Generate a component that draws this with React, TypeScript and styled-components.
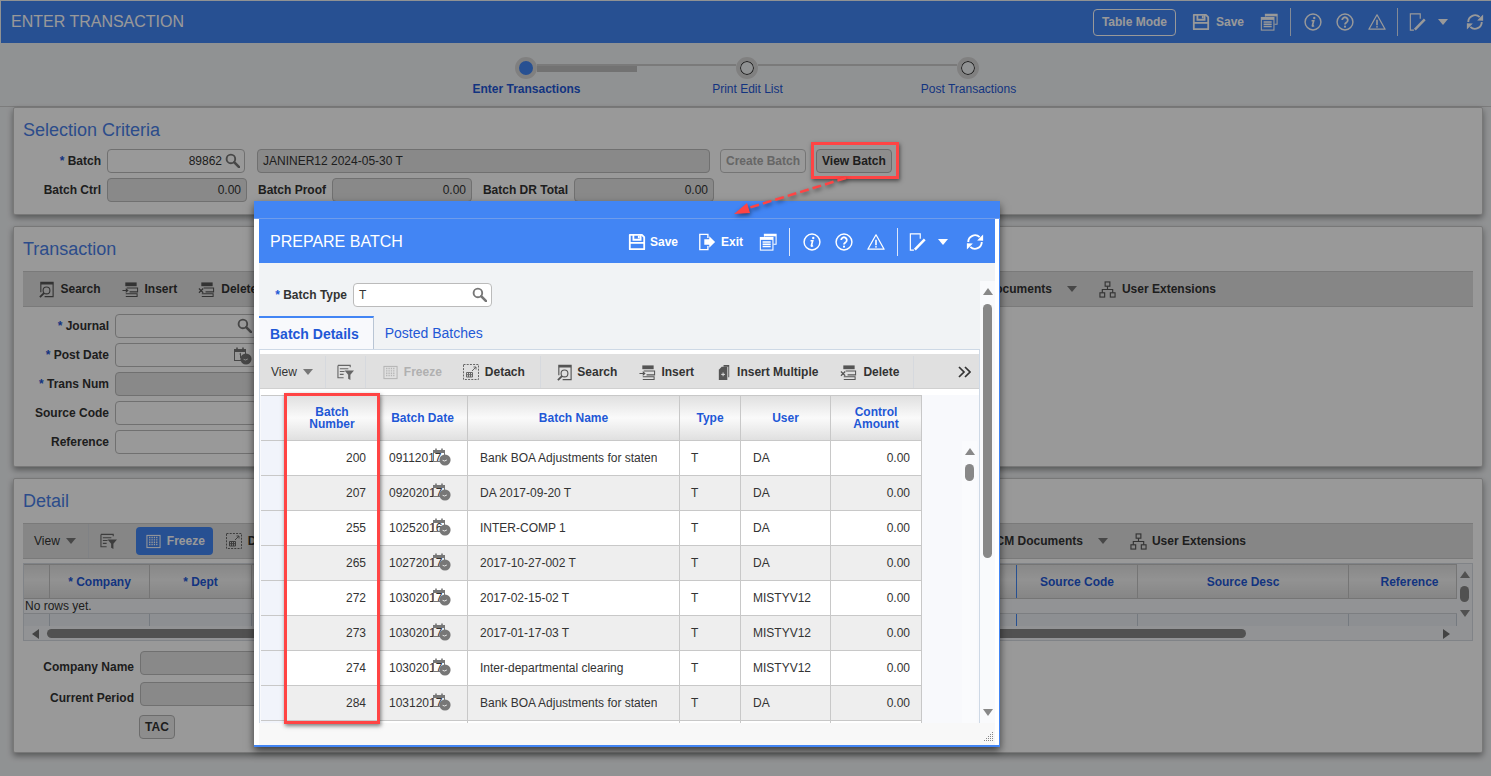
import React from 'react';
import styled, { createGlobalStyle } from 'styled-components';

const GlobalStyle = createGlobalStyle`
    html, body {
        margin: 0;
        padding: 0;
        background-color: #f1f3f5;
        font-family: "Liberation Sans", Arial, sans-serif;
        font-size: 12px;
        color: #333333;
    }
    * {
        box-sizing: border-box;
    }
`;

type IconProps = { size?: number };

const SaveIcon = ({ size = 18 }: IconProps) => (
    <svg width={size} height={size} viewBox="0 0 20 20" fill="none" stroke="currentColor" strokeWidth="2">
        <path d="M2 2h13.5L18 4.5V18H2z" strokeLinejoin="round" />
        <path d="M6 2v5.5h8V2" />
        <path d="M2 11h16" />
        <rect x="11" y="3" width="2" height="3" fill="currentColor" stroke="none" />
    </svg>
);

const ExitIcon = ({ size = 18 }: IconProps) => (
    <svg width={size} height={size} viewBox="0 0 20 20" fill="none" stroke="currentColor" strokeWidth="1.5">
        <path d="M11 5.5V1.5H2v17h9v-4" />
        <path d="M7 7h5.5V3.5L19 10l-6.5 6.5V13H7z" fill="currentColor" stroke="none" />
    </svg>
);

const ReportIcon = ({ size = 18 }: IconProps) => (
    <svg width={size} height={size} viewBox="0 0 20 20" fill="none" stroke="currentColor" strokeWidth="1.2">
        <path d="M6 4V1.5h13v11h-3" />
        <rect x="1.5" y="5" width="14" height="14" fill="none" />
        <path d="M1.5 6.5h14M4 10h9M4 12.5h9M4 15h9" strokeWidth="1.4" />
        <rect x="1.5" y="5" width="14" height="2.5" fill="currentColor" stroke="none" />
        <rect x="6" y="1.5" width="13" height="2.2" fill="currentColor" stroke="none" />
    </svg>
);

const InfoIcon = ({ size = 18 }: IconProps) => (
    <svg width={size} height={size} viewBox="0 0 20 20" fill="none" stroke="currentColor" strokeWidth="1.6">
        <circle cx="10" cy="10" r="8.8" />
        <path d="M8.4 8.6h2.4l-1.5 5.6c-.1.6.5.7 1.8-.3" strokeWidth="1.8" />
        <circle cx="11.4" cy="5.6" r="1.3" fill="currentColor" stroke="none" />
    </svg>
);

const HelpIcon = ({ size = 18 }: IconProps) => (
    <svg width={size} height={size} viewBox="0 0 20 20" fill="none" stroke="currentColor" strokeWidth="1.6">
        <circle cx="10" cy="10" r="8.8" />
        <path d="M6.9 7.9a3.1 3.1 0 1 1 4.9 2.5c-1.1.8-1.8 1.2-1.8 2.4" strokeWidth="2" />
        <circle cx="10" cy="15.2" r="1.2" fill="currentColor" stroke="none" />
    </svg>
);

const WarnIcon = ({ size = 18 }: IconProps) => (
    <svg width={size} height={size} viewBox="0 0 20 20" fill="none" stroke="currentColor" strokeWidth="1.4">
        <path d="M10 2L19 18H1z" strokeLinejoin="round" />
        <path d="M10 7.5v6" strokeWidth="1.8" />
        <circle cx="10" cy="15.4" r="1" fill="currentColor" stroke="none" />
    </svg>
);

const EditIcon = ({ size = 18 }: IconProps) => (
    <svg width={size} height={size} viewBox="0 0 20 20" fill="none" stroke="currentColor" strokeWidth="1.3">
        <path d="M12.5 6.5V1H1.5v18h4" />
        <path d="M6.5 18.5L17.5 7" strokeWidth="2.8" />
    </svg>
);

const RefreshIcon = ({ size = 18 }: IconProps) => (
    <svg width={size} height={size} viewBox="0 0 20 20" fill="none" stroke="currentColor" strokeWidth="2.1">
        <path d="M2.5 10A7.5 7.5 0 0 1 15.2 4.6" />
        <path d="M17.5 10A7.5 7.5 0 0 1 4.8 15.4" />
        <path d="M19 1.8v6.8l-6.6-.4z" fill="currentColor" stroke="none" />
        <path d="M1 18.2v-6.8l6.6.4z" fill="currentColor" stroke="none" />
    </svg>
);

const MagnifierIcon = ({ size = 15 }: IconProps) => (
    <svg width={size} height={size} viewBox="0 0 16 16" fill="none" stroke="#777777" strokeWidth="2">
        <circle cx="6.3" cy="6.3" r="4.6" />
        <path d="M10 10l5 5" strokeWidth="2.8" strokeLinecap="round" />
    </svg>
);

const CalendarIcon = ({ size = 18, day }: IconProps & { day?: string }) => (
    <svg width={size} height={size} viewBox="0 0 18 18" fill="none" stroke="#777777" strokeWidth="1">
        <rect x="0.5" y="2.5" width="11" height="11" />
        <path d="M0.5 4h11" strokeWidth="2" />
        <path d="M3 0.5v3M9 0.5v3" strokeWidth="1.6" />
        {day && <path d="M5.5 7l1-.8V11" />}
        <circle cx="12" cy="12" r="5.6" fill="#777777" stroke="none" />
        <path d="M9.6 12.3l2 .7 2.2-1" stroke="#e8e8e8" strokeWidth="1" />
    </svg>
);

const SearchDocIcon = ({ size = 17 }: IconProps) => (
    <svg width={size} height={size} viewBox="0 0 18 18" fill="none" stroke="#555555" strokeWidth="1.2">
        <path d="M3 12V1.5h13v15H7" />
        <rect x="3" y="1.5" width="13" height="2.2" fill="#555555" stroke="none" />
        <circle cx="9" cy="10" r="3.6" />
        <path d="M6.3 12.8L2 17" strokeWidth="2" />
    </svg>
);

const InsertIcon = ({ size = 17 }: IconProps) => (
    <svg width={size} height={size} viewBox="0 0 18 18" fill="none" stroke="#555555" strokeWidth="1.1">
        <rect x="3.5" y="1.5" width="12" height="4" fill="#555555" stroke="none" />
        <path d="M5 7.5h11.5v4H8M4 13.5h12v3H4" />
        <path d="M0.5 9.5h3.5V7.5l3 2.6-3 2.6v-2H0.5z" fill="#555555" stroke="none" />
    </svg>
);

const DeleteIcon = ({ size = 17 }: IconProps) => (
    <svg width={size} height={size} viewBox="0 0 18 18" fill="none" stroke="#555555" strokeWidth="1.1">
        <rect x="3.5" y="1.5" width="12" height="4" fill="#555555" stroke="none" />
        <path d="M6 7.5h10.5v4H8M4 13.5h12v3H4" />
        <path d="M1 8l4.5 4.5M5.5 8L1 12.5" strokeWidth="1.3" />
    </svg>
);

const InsertMultipleIcon = ({ size = 17 }: IconProps) => (
    <svg width={size} height={size} viewBox="0 0 18 18">
        <path d="M8 1h6v13h-1V3H8z" fill="#555555" />
        <path d="M6 3h6v14H3V6z" fill="#555555" />
        <path d="M7.5 9v4M5.5 11h4" stroke="#e0e0e0" strokeWidth="1" />
    </svg>
);

const FilterIcon = () => (
    <svg width={17} height={17} viewBox="0 0 18 18" fill="none" stroke="#666666" strokeWidth="1.2">
        <path d="M1 1.5h13v2M1 1.5v13h6M3 5h9M3 8h5M3 11h4" />
        <path d="M8 7h10l-3.8 4.5V17l-2.4-1.4v-4.1z" fill="#666666" stroke="none" />
    </svg>
);

const FreezeIcon = ({ color = '#b5b5b5' }: { color?: string }) => (
    <svg width={15} height={15} viewBox="0 0 16 16" fill="none" stroke={color} strokeWidth="1.1">
        <rect x="1" y="1.5" width="14" height="13" />
        <path d="M4 3v10M6.5 3v10M9 3v10M11.5 3v10" strokeWidth="1.4" strokeDasharray="1.5 1" />
    </svg>
);

const DetachIcon = ({ size = 16 }: IconProps) => (
    <svg width={size} height={size} viewBox="0 0 16 16" fill="none" stroke="#666666" strokeWidth="1">
        <rect x="0.5" y="0.5" width="15" height="15" strokeDasharray="2 1.2" />
        <path d="M9 7l4-4M10.5 3H13v2.5" />
        <path d="M3.5 8.5h6v4.5h-6zM3.5 10.7h6M5.5 8.5V13M7.5 8.5V13" />
    </svg>
);

const UserExtIcon = ({ size = 17 }: IconProps) => (
    <svg width={size} height={size} viewBox="0 0 18 18" fill="none" stroke="#555555" strokeWidth="1.2">
        <rect x="6.5" y="1" width="5" height="4.5" />
        <rect x="1" y="12.5" width="5" height="4.5" />
        <rect x="12" y="12.5" width="5" height="4.5" />
        <path d="M9 5.5V9M3.5 12.5V9h11v3.5" />
    </svg>
);

const ChevronsIcon = () => (
    <svg width={13} height={12} viewBox="0 0 13 12" fill="none" stroke="#333333" strokeWidth="1.7">
        <path d="M1 1l5 5-5 5M7 1l5 5-5 5" />
    </svg>
);

const Shell = styled.div`
    position: relative;
    width: 1491px;
    height: 776px;
    overflow: hidden;
    background-color: #f1f3f5;
`;

const Page = styled.div`
    display: flex;
    flex-direction: column;
    height: 776px;
    padding: 1px 0 0 1px;
    background-color: #f1f3f5;
`;

const PageHeader = styled.header`
    display: flex;
    align-items: center;
    justify-content: space-between;
    height: 42px;
    flex-shrink: 0;
    padding: 0 7px 0 10px;
    background-color: #4285f4;
    color: #ffffff;
`;

const HeaderTitle = styled.div`
    font-size: 16px;
    line-height: 20px;
`;

const ActionBar = styled.div`
    display: flex;
    align-items: center;
    gap: 14px;
    height: 100%;
    color: #ffffff;
`;

const ActionText = styled.span<{ $gap: number; $after?: number }>`
    display: inline-flex;
    align-items: center;
    gap: ${(p) => p.$gap}px;
    margin-right: ${(p) => p.$after ?? 2}px;
    font-size: 12px;
    font-weight: 700;
`;

const ActionIcon = styled.span`
    display: inline-flex;
    width: 18px;
    height: 18px;
`;

const ActionDivider = styled.span<{ $before: number; $after: number }>`
    width: 1px;
    height: 28px;
    margin: 0 ${(p) => p.$after}px 0 ${(p) => p.$before}px;
    background-color: #dbe6fb;
`;

const Caret = styled.span<{ $color?: string }>`
    display: inline-block;
    width: 0;
    height: 0;
    border-left: 5px solid transparent;
    border-right: 5px solid transparent;
    border-top: 6px solid ${(p) => p.$color ?? '#ffffff'};
`;

const HeaderCaret = styled(Caret)`
    margin: 0 4px 0 -3px;
`;

const TableModeButton = styled.span`
    display: inline-flex;
    align-items: center;
    justify-content: center;
    width: 83px;
    height: 27px;
    margin-right: 2px;
    border: 1px solid #ffffff;
    border-radius: 4px;
    font-size: 12px;
    font-weight: 700;
`;

const Stepper = styled.div`
    flex-shrink: 0;
    height: 64px;
    padding-top: 14px;
    border-bottom: 1px solid #cfcfcf;
    margin-left: -1px;
`;

const StepTrack = styled.div`
    display: flex;
    align-items: center;
    justify-content: center;
    height: 22px;
    padding-left: 2px;
`;

const StepDot = styled.span<{ $active?: boolean }>`
    display: block;
    flex-shrink: 0;
    width: 22px;
    height: 22px;
    border-radius: 50%;
    border: 4px solid #d6d6d6;
    background-color: ${(p) => (p.$active ? '#4285f4' : '#f1f3f5')};
    box-shadow: ${(p) => (p.$active ? 'none' : 'inset 0 0 0 1px #333333')};
`;

const StepLine = styled.span`
    display: block;
    width: 199px;
    height: 8px;
    border-top: 2px solid #cccccc;
`;

const StepProgress = styled.span`
    display: block;
    width: 100px;
    height: 6px;
    background-color: #bfbfbf;
`;

const StepLabels = styled.div`
    display: grid;
    grid-template-columns: repeat(3, 221px);
    justify-content: center;
    padding-left: 4px;
    margin-top: 3px;
`;

const StepLabel = styled.div<{ $active?: boolean }>`
    text-align: center;
    font-size: 12px;
    line-height: 15px;
    font-weight: ${(p) => (p.$active ? 700 : 400)};
    color: #1f58d6;
`;

const Panels = styled.div`
    display: flex;
    flex-direction: column;
    margin: 0 7px 0 12px;
    width: 1470px;
`;

const Panel = styled.section<{ $height: number; $top: number }>`
    height: ${(p) => p.$height}px;
    margin-top: ${(p) => p.$top}px;
    padding: 11px 9px 0;
    background-color: #ffffff;
    border: 1px solid #c8c8c8;
    border-radius: 2px;
    box-shadow: 0 3px 6px rgba(0, 0, 0, 0.4);
`;

const PanelTitle = styled.h2<{ $after: number }>`
    margin: 0 0 ${(p) => p.$after}px;
    height: 22px;
    font-size: 18px;
    line-height: 22px;
    font-weight: 400;
    color: #4a7fe8;
`;

const FieldRow = styled.div<{ $gap?: number }>`
    display: flex;
    align-items: center;
    height: 24px;
    margin-bottom: ${(p) => p.$gap ?? 5}px;
`;

const FieldLabel = styled.label<{ $width: number; $drop?: number }>`
    flex-shrink: 0;
    width: ${(p) => p.$width}px;
    padding: ${(p) => p.$drop ?? 0}px 6px 0 0;
    text-align: right;
    font-size: 12px;
    font-weight: 700;
    color: #333333;
    white-space: nowrap;
`;

const Star = styled.span`
    color: #1f58d6;
`;

const Input = styled.div<{ $width: number; $disabled?: boolean; $right?: boolean; $after?: number }>`
    position: relative;
    display: flex;
    align-items: center;
    justify-content: ${(p) => (p.$right ? 'flex-end' : 'flex-start')};
    flex-shrink: 0;
    width: ${(p) => p.$width}px;
    height: 24px;
    margin-right: ${(p) => p.$after ?? 0}px;
    padding: 0 5px;
    background-color: ${(p) => (p.$disabled ? '#e4e4e4' : '#ffffff')};
    border: 1px solid #bbbbbb;
    border-radius: 4px;
    font-size: 12px;
    color: #333333;
    white-space: nowrap;
`;

const InputValue = styled.span`
    margin-right: 17px;
`;

const InputIcon = styled.span`
    position: absolute;
    top: 3px;
    right: 4px;
    display: inline-flex;
`;

const PlainButton = styled.span<{ $disabled?: boolean; $after?: number }>`
    display: inline-flex;
    align-items: center;
    justify-content: center;
    height: 24px;
    margin-right: ${(p) => p.$after ?? 0}px;
    padding: 0 5px;
    background-color: ${(p) => (p.$disabled ? 'transparent' : '#ececec')};
    border: 1px solid ${(p) => (p.$disabled ? '#c4c4c4' : '#b5b5b5')};
    border-radius: 4px;
    font-size: 12px;
    font-weight: 700;
    color: ${(p) => (p.$disabled ? '#aaaaaa' : '#333333')};
    white-space: nowrap;
`;

const TacButton = styled(PlainButton)`
    margin-left: 116px;
    padding: 0 4px;
    width: 36px;
`;

const Toolbar = styled.div<{ $after?: number }>`
    display: flex;
    align-items: center;
    justify-content: space-between;
    height: 36px;
    margin-bottom: ${(p) => p.$after ?? 0}px;
    background-color: #e0e0e0;
    border-top: 1px solid #cccccc;
    border-bottom: 1px solid #cccccc;
`;

const ToolGroup = styled.div<{ $left?: number; $right?: number }>`
    display: flex;
    align-items: center;
    height: 100%;
    padding: 0 ${(p) => p.$right ?? 0}px 0 ${(p) => p.$left ?? 0}px;
`;

const ToolItem = styled.span<{ $faded?: boolean; $pad?: number; $gap?: number }>`
    display: inline-flex;
    align-items: center;
    gap: ${(p) => p.$gap ?? 6}px;
    height: 100%;
    padding: 0 ${(p) => p.$pad ?? 10.5}px;
    font-size: 12px;
    font-weight: 700;
    white-space: nowrap;
    color: ${(p) => (p.$faded ? '#b0b0b0' : '#333333')};
`;

const ViewItem = styled(ToolItem)`
    padding: 0 9px 0 11px;
    font-weight: 400;
`;

const ToolDivider = styled.span<{ $side?: number }>`
    flex-shrink: 0;
    width: 1px;
    height: 100%;
    margin: 0 ${(p) => p.$side ?? 3}px;
    background-color: #d6d9de;
`;

const FreezeDisabled = styled(ToolItem)`
    padding-left: 14px;
`;

const FreezeButton = styled.span`
    display: inline-flex;
    align-items: center;
    gap: 6px;
    height: 28px;
    width: 77px;
    margin: 0 11px 0 11px;
    padding-left: 10px;
    border-radius: 4px;
    background-color: #4285f4;
    color: #ffffff;
    font-size: 12px;
    font-weight: 700;
`;

const GridFrame = styled.div`
    height: 78px;
    margin-bottom: 10px;
    background-color: #f4f6f8;
    border: 1px solid #d6dbe2;
`;

const GridTop = styled.div`
    display: flex;
    height: 62px;
`;

const GridMain = styled.div`
    flex: 1;
    min-width: 0;
    display: flex;
    flex-direction: column;
`;

const DetailHead = styled.div`
    display: grid;
    grid-template-columns: 26px 100px 102px 1fr 121px 211px 108px;
    height: 35px;
    border-top: 1px solid #c4c4c4;
    border-bottom: 1px solid #c4c4c4;
    background: linear-gradient(#e3e3e3, #f4f4f4 45%, #dfdfdf);
`;

const DetailHeadCell = styled.div<{ $edge?: boolean; $shift?: number }>`
    display: flex;
    align-items: center;
    justify-content: center;
    padding-left: ${(p) => p.$shift ?? 0}px;
    border-right: 1px solid ${(p) => (p.$edge ? '#4285f4' : '#c4c4c4')};
    font-size: 12px;
    font-weight: 700;
    color: #1f58d6;
`;

const NoRows = styled.div`
    height: 15px;
    padding-left: 1px;
    border-bottom: 1px solid #cfd3d8;
    font-size: 12px;
    line-height: 15px;
    color: #333333;
`;

const DetailBlank = styled.div`
    display: grid;
    grid-template-columns: 26px 100px 102px 1fr 121px 211px 108px;
    flex: 1;
    background-color: #eceff3;
`;

const DetailBlankCell = styled.div<{ $edge?: boolean }>`
    border-right: 1px solid ${(p) => (p.$edge ? '#4285f4' : '#c4ccd6')};
`;

const VScroll = styled.div`
    flex-shrink: 0;
    display: flex;
    flex-direction: column;
    align-items: center;
    width: 15px;
    padding-top: 7px;
`;

const ScrollThumb = styled.div<{ $size: number; $top: number }>`
    flex-shrink: 0;
    width: 9px;
    height: ${(p) => p.$size}px;
    margin-top: ${(p) => p.$top}px;
    border-radius: 5px;
    background-color: #888888;
`;

const ArrowUp = styled.span`
    width: 0;
    height: 0;
    flex-shrink: 0;
    border-left: 5px solid transparent;
    border-right: 5px solid transparent;
    border-bottom: 7px solid #888888;
`;

const ArrowDown = styled.span<{ $bottom?: number }>`
    width: 0;
    height: 0;
    flex-shrink: 0;
    margin-top: auto;
    margin-bottom: ${(p) => p.$bottom ?? 7}px;
    border-left: 5px solid transparent;
    border-right: 5px solid transparent;
    border-top: 7px solid #888888;
`;

const HScroll = styled.div`
    display: flex;
    align-items: center;
    height: 15px;
    padding: 0 22px 0 8px;
`;

const ArrowLeft = styled.span`
    flex-shrink: 0;
    width: 0;
    height: 0;
    border-top: 5px solid transparent;
    border-bottom: 5px solid transparent;
    border-right: 7px solid #707070;
`;

const ArrowRight = styled(ArrowLeft)`
    margin-left: auto;
    border-right: 0;
    border-left: 7px solid #707070;
`;

const HThumb = styled.div`
    width: 1199px;
    height: 9px;
    margin-left: 8px;
    border-radius: 5px;
    background-color: #888888;
`;

const Dim = styled.div`
    position: absolute;
    inset: 0;
    z-index: 1;
    background-color: rgba(0, 0, 0, 0.4);
`;

const Dialog = styled.div`
    position: absolute;
    left: 254px;
    top: 201px;
    z-index: 2;
    display: flex;
    flex-direction: column;
    width: 746px;
    height: 546px;
    background-color: #ffffff;
    border-right: 1px solid #4285f4;
    border-bottom: 2px solid #4285f4;
    box-shadow: 0 4px 8px rgba(0, 0, 0, 0.6);
`;

const DialogCap = styled.div`
    flex-shrink: 0;
    height: 18px;
    margin-right: -1px;
    background-color: #4285f4;
    border-bottom: 1px solid #6f9ceb;
`;

const DialogFrame = styled.div`
    flex: 1;
    display: flex;
    flex-direction: column;
    min-height: 0;
    padding: 0 4px 0 5px;
`;

const DialogHeader = styled.div`
    display: flex;
    align-items: center;
    justify-content: space-between;
    flex-shrink: 0;
    height: 44px;
    padding: 2px 11px 0 11px;
    background-color: #4285f4;
    color: #ffffff;
`;

const DialogBody = styled.div`
    display: flex;
    flex-shrink: 0;
    height: 460px;
    background-color: #f1f3f5;
`;

const DialogMain = styled.div`
    flex: 1;
    min-width: 0;
    padding-top: 20px;
`;

const TypeRow = styled.div`
    display: flex;
    align-items: center;
    height: 24px;
    margin-bottom: 9px;
`;

const Tabs = styled.div`
    display: flex;
    height: 33px;
`;

const Tab = styled.div<{ $active?: boolean }>`
    display: flex;
    align-items: center;
    padding: ${(p) => (p.$active ? '0 14px 0 11px' : '0 11px')};
    font-size: 14px;
    font-weight: ${(p) => (p.$active ? 700 : 400)};
    color: #1f58d6;
    background-color: ${(p) => (p.$active ? '#f8f9fc' : 'transparent')};
    border-top: ${(p) => (p.$active ? '2px solid #4285f4' : '0')};
    border-right: ${(p) => (p.$active ? '1px solid #b9c5d4' : '0')};
`;

const TabPanel = styled.div`
    height: 374px;
    padding-top: 4px;
    background-color: #ffffff;
    border: 1px solid #ced9e6;
    border-bottom: 0;
`;

const GridToolbar = styled(Toolbar)`
    justify-content: flex-start;
    height: 35px;
    margin: 0;
    padding-top: 2px;
    border-top: 0;
    border-bottom: 1px solid #d0d0d0;
`;

const MoreChevrons = styled.span`
    display: inline-flex;
    margin-left: auto;
    padding-right: 8px;
`;

const TableArea = styled.div`
    display: flex;
    height: 334px;
    margin-top: 6px;
    padding-left: 1px;
    background-color: #f8f9fc;
    overflow: hidden;
`;

const BatchTable = styled.div`
    flex-shrink: 0;
    width: 661px;
    margin-right: 40px;
`;

const TableRow = styled.div<{ $alt?: boolean }>`
    display: grid;
    grid-template-columns: 26px 91px 90px 212px 61px 90px 91px;
    height: 35px;
    background-color: ${(p) => (p.$alt ? '#eeeeee' : '#ffffff')};
    border-bottom: 1px solid #c8c8c8;
`;

const TableHead = styled(TableRow)`
    height: 46px;
    border-top: 1px solid #c8c8c8;
    background: linear-gradient(#e0e0e0, #fafafa 50%, #e0e0e0);
`;

const HeadCell = styled.div<{ $blank?: boolean }>`
    display: flex;
    align-items: center;
    justify-content: center;
    text-align: center;
    font-size: 12px;
    line-height: 12px;
    font-weight: 700;
    color: #1f58d6;
    border-right: 1px solid #c8c8c8;
    background: ${(p) => (p.$blank ? '#f1f4fb' : 'transparent')};
`;

const Cell = styled.div<{ $right?: boolean; $pad?: number }>`
    position: relative;
    display: flex;
    align-items: center;
    justify-content: ${(p) => (p.$right ? 'flex-end' : 'flex-start')};
    padding: ${(p) => (p.$right ? `0 ${p.$pad ?? 11}px 0 0` : `0 0 0 ${p.$pad ?? 11}px`)};
    font-size: 12px;
    color: #333333;
    white-space: nowrap;
    border-right: 1px solid #c8c8c8;
`;

const SelectCell = styled(Cell)`
    background-color: #f1f4fb;
`;

const NameText = styled.span`
    display: block;
    width: 177px;
    overflow: hidden;
`;

const DateIcon = styled.span`
    position: absolute;
    right: 16px;
    top: 7px;
    display: inline-flex;
`;

const InnerScroll = styled(VScroll)`
    margin-top: 46px;
    height: 288px;
    background-color: #fafbfd;
`;

const OuterScroll = styled(VScroll)`
    margin-top: 18px;
    height: 442px;
    background-color: #f9fafc;
`;

const DialogFooter = styled.div`
    position: relative;
    flex: 1;
    background-color: #f8f8f8;
`;

const ResizeGrip = styled.svg`
    position: absolute;
    right: 1px;
    bottom: 3px;
`;

const ViewBatchMark = styled.div`
    position: absolute;
    left: 811px;
    top: 142px;
    z-index: 3;
    width: 88px;
    height: 37px;
    border: 3px solid #ff4444;
    box-shadow: 1px 2px 4px rgba(0, 0, 0, 0.5);
`;

const ColumnMark = styled.div`
    position: absolute;
    left: 284px;
    top: 393px;
    z-index: 3;
    width: 96px;
    height: 331px;
    border: 3px solid #ff4444;
    box-shadow: 1px 2px 4px rgba(0, 0, 0, 0.5);
`;

const ArrowMark = styled.svg`
    position: absolute;
    left: 725px;
    top: 170px;
    z-index: 3;
    filter: drop-shadow(1px 2px 2px rgba(0, 0, 0, 0.5));
`;

const batches = [
    { num: '200', date: '09112017', name: 'Bank BOA Adjustments for staten', user: 'DA' },
    { num: '207', date: '09202017', name: 'DA 2017-09-20 T', user: 'DA' },
    { num: '255', date: '10252016', name: 'INTER-COMP 1', user: 'DA' },
    { num: '265', date: '10272017', name: '2017-10-27-002 T', user: 'DA' },
    { num: '272', date: '10302017', name: '2017-02-15-02 T', user: 'MISTYV12' },
    { num: '273', date: '10302017', name: '2017-01-17-03 T', user: 'MISTYV12' },
    { num: '274', date: '10302017', name: 'Inter-departmental clearing', user: 'MISTYV12' },
    { num: '284', date: '10312017', name: 'Bank BOA Adjustments for staten', user: 'DA' },
];

const RightActions = ({ before }: { before: number }) => (
    <>
        <ActionIcon><ReportIcon /></ActionIcon>
        <ActionDivider $before={-2} $after={-1} />
        <ActionIcon><InfoIcon /></ActionIcon>
        <ActionIcon><HelpIcon /></ActionIcon>
        <ActionIcon><WarnIcon /></ActionIcon>
        <ActionDivider $before={before} $after={-3} />
        <ActionIcon><EditIcon /></ActionIcon>
        <HeaderCaret />
        <ActionIcon><RefreshIcon /></ActionIcon>
    </>
);

const DetailCells = () => (
    <>
        {Array.from({ length: 7 }).map((_, i) => <DetailBlankCell key={i} $edge={i === 3} />)}
    </>
);

export default function App() {
    return (
        <Shell>
            <GlobalStyle />
            <Page>
                <PageHeader>
                    <HeaderTitle>ENTER TRANSACTION</HeaderTitle>
                    <ActionBar>
                        <TableModeButton>Table Mode</TableModeButton>
                        <ActionText $gap={6}><ActionIcon><SaveIcon /></ActionIcon>Save</ActionText>
                        <RightActions before={-3} />
                    </ActionBar>
                </PageHeader>

                <Stepper>
                    <StepTrack>
                        <StepDot $active />
                        <StepLine><StepProgress /></StepLine>
                        <StepDot />
                        <StepLine />
                        <StepDot />
                    </StepTrack>
                    <StepLabels>
                        <StepLabel $active>Enter Transactions</StepLabel>
                        <StepLabel>Print Edit List</StepLabel>
                        <StepLabel>Post Transactions</StepLabel>
                    </StepLabels>
                </Stepper>

                <Panels>
                    <Panel $height={108} $top={0}>
                        <PanelTitle $after={8}>Selection Criteria</PanelTitle>
                        <FieldRow>
                            <FieldLabel $width={84}><Star>* </Star>Batch</FieldLabel>
                            <Input $width={138} $right $after={12}>
                                <InputValue>89862</InputValue>
                                <InputIcon><MagnifierIcon /></InputIcon>
                            </Input>
                            <Input $width={453} $disabled $after={10}>JANINER12 2024-05-30 T</Input>
                            <PlainButton $disabled $after={10}>Create Batch</PlainButton>
                            <PlainButton>View Batch</PlainButton>
                        </FieldRow>
                        <FieldRow>
                            <FieldLabel $width={84}>Batch Ctrl</FieldLabel>
                            <Input $width={140} $disabled $right>0.00</Input>
                            <FieldLabel $width={85}>Batch Proof</FieldLabel>
                            <Input $width={140} $disabled $right>0.00</Input>
                            <FieldLabel $width={102}>Batch DR Total</FieldLabel>
                            <Input $width={140} $disabled $right>0.00</Input>
                        </FieldRow>
                    </Panel>

                    <Panel $height={241} $top={11}>
                        <PanelTitle $after={11}>Transaction</PanelTitle>
                        <Toolbar $after={7}>
                            <ToolGroup $left={4}>
                                <ToolItem><SearchDocIcon />Search</ToolItem>
                                <ToolItem><InsertIcon />Insert</ToolItem>
                                <ToolItem><DeleteIcon />Delete</ToolItem>
                            </ToolGroup>
                            <ToolGroup $right={244}>
                                <ToolItem $pad={6}>ICM Documents</ToolItem>
                                <ToolItem $pad={9}><Caret $color="#777777" /></ToolItem>
                                <ToolItem $pad={13}><UserExtIcon />User Extensions</ToolItem>
                            </ToolGroup>
                        </Toolbar>
                        <FieldRow><FieldLabel $width={92}><Star>* </Star>Journal</FieldLabel>
                            <Input $width={142}><InputIcon><MagnifierIcon /></InputIcon></Input></FieldRow>
                        <FieldRow><FieldLabel $width={92}><Star>* </Star>Post Date</FieldLabel>
                            <Input $width={142}><InputIcon><CalendarIcon day="1" /></InputIcon></Input></FieldRow>
                        <FieldRow><FieldLabel $width={92}><Star>* </Star>Trans Num</FieldLabel>
                            <Input $width={142} $disabled /></FieldRow>
                        <FieldRow><FieldLabel $width={92}>Source Code</FieldLabel>
                            <Input $width={142} /></FieldRow>
                        <FieldRow><FieldLabel $width={92}>Reference</FieldLabel>
                            <Input $width={142} /></FieldRow>
                    </Panel>

                    <Panel $height={275} $top={11}>
                        <PanelTitle $after={11}>Detail</PanelTitle>
                        <Toolbar $after={4}>
                            <ToolGroup>
                                <ViewItem>View <Caret $color="#777777" /></ViewItem>
                                <ToolDivider />
                                <ToolItem $pad={8}><FilterIcon /></ToolItem>
                                <FreezeButton><FreezeIcon color="#ffffff" />Freeze</FreezeButton>
                                <ToolItem $pad={2}><DetachIcon />Detach</ToolItem>
                            </ToolGroup>
                            <ToolGroup $right={214}>
                                <ToolItem $pad={6}>ICM Documents</ToolItem>
                                <ToolItem $pad={9}><Caret $color="#777777" /></ToolItem>
                                <ToolItem $pad={13} $gap={5}><UserExtIcon />User Extensions</ToolItem>
                            </ToolGroup>
                        </Toolbar>
                        <GridFrame>
                            <GridTop>
                                <GridMain>
                                    <DetailHead>
                                        <DetailHeadCell />
                                        <DetailHeadCell><Star>*&nbsp;</Star>Company</DetailHeadCell>
                                        <DetailHeadCell><Star>*&nbsp;</Star>Dept</DetailHeadCell>
                                        <DetailHeadCell $edge />
                                        <DetailHeadCell>Source Code</DetailHeadCell>
                                        <DetailHeadCell>Source Desc</DetailHeadCell>
                                        <DetailHeadCell $shift={14}>Reference</DetailHeadCell>
                                    </DetailHead>
                                    <NoRows>No rows yet.</NoRows>
                                    <DetailBlank><DetailCells /></DetailBlank>
                                </GridMain>
                                <VScroll>
                                    <ArrowUp />
                                    <ScrollThumb $size={16} $top={8} />
                                    <ArrowDown $bottom={9} />
                                </VScroll>
                            </GridTop>
                            <HScroll>
                                <ArrowLeft />
                                <HThumb />
                                <ArrowRight />
                            </HScroll>
                        </GridFrame>
                        <FieldRow $gap={7}><FieldLabel $width={117} $drop={8}>Company Name</FieldLabel>
                            <Input $width={142} $disabled /></FieldRow>
                        <FieldRow $gap={9}><FieldLabel $width={117} $drop={8}>Current Period</FieldLabel>
                            <Input $width={142} $disabled /></FieldRow>
                        <FieldRow><TacButton>TAC</TacButton></FieldRow>
                    </Panel>
                </Panels>
            </Page>

            <Dim />

            <Dialog>
                <DialogCap />
                <DialogFrame>
                    <DialogHeader>
                        <HeaderTitle>PREPARE BATCH</HeaderTitle>
                        <ActionBar>
                            <ActionText $gap={4} $after={6}><ActionIcon><SaveIcon /></ActionIcon>Save</ActionText>
                            <ActionText $gap={5}><ActionIcon><ExitIcon /></ActionIcon>Exit</ActionText>
                            <RightActions before={-2} />
                        </ActionBar>
                    </DialogHeader>
                    <DialogBody>
                        <DialogMain>
                            <TypeRow>
                                <FieldLabel $width={94}><Star>* </Star>Batch Type</FieldLabel>
                                <Input $width={139}>T<InputIcon><MagnifierIcon /></InputIcon></Input>
                            </TypeRow>
                            <Tabs>
                                <Tab $active>Batch Details</Tab>
                                <Tab>Posted Batches</Tab>
                            </Tabs>
                            <TabPanel>
                                <GridToolbar>
                                    <ViewItem>View <Caret $color="#777777" /></ViewItem>
                                    <ToolDivider />
                                    <ToolItem $pad={8}><FilterIcon /></ToolItem>
                                    <ToolDivider />
                                    <FreezeDisabled $faded><FreezeIcon />Freeze</FreezeDisabled>
                                    <ToolItem><DetachIcon />Detach</ToolItem>
                                    <ToolDivider $side={4.5} />
                                    <ToolItem $pad={11} $gap={4}><SearchDocIcon />Search</ToolItem>
                                    <ToolItem $pad={11} $gap={5}><InsertIcon />Insert</ToolItem>
                                    <ToolItem $pad={11} $gap={4}><InsertMultipleIcon />Insert Multiple</ToolItem>
                                    <ToolItem $pad={11}><DeleteIcon />Delete</ToolItem>
                                    <ToolDivider />
                                    <MoreChevrons><ChevronsIcon /></MoreChevrons>
                                </GridToolbar>
                                <TableArea>
                                    <BatchTable>
                                        <TableHead>
                                            <HeadCell $blank />
                                            <HeadCell>Batch<br />Number</HeadCell>
                                            <HeadCell>Batch Date</HeadCell>
                                            <HeadCell>Batch Name</HeadCell>
                                            <HeadCell>Type</HeadCell>
                                            <HeadCell>User</HeadCell>
                                            <HeadCell>Control<br />Amount</HeadCell>
                                        </TableHead>
                                        {batches.map((item, i) => (
                                            <TableRow key={item.num} $alt={i % 2 === 1}>
                                                <SelectCell />
                                                <Cell $right $pad={11}>{item.num}</Cell>
                                                <Cell>
                                                    {item.date}
                                                    <DateIcon><CalendarIcon /></DateIcon>
                                                </Cell>
                                                <Cell $pad={12}><NameText>{item.name}</NameText></Cell>
                                                <Cell>T</Cell>
                                                <Cell $pad={12}>{item.user}</Cell>
                                                <Cell $right>0.00</Cell>
                                            </TableRow>
                                        ))}
                                        <TableRow>
                                            <SelectCell />
                                            <Cell /><Cell /><Cell /><Cell /><Cell /><Cell />
                                        </TableRow>
                                    </BatchTable>
                                    <InnerScroll>
                                        <ArrowUp />
                                        <ScrollThumb $size={17} $top={9} />
                                    </InnerScroll>
                                </TableArea>
                            </TabPanel>
                        </DialogMain>
                        <OuterScroll>
                            <ArrowUp />
                            <ScrollThumb $size={254} $top={9} />
                            <ArrowDown />
                        </OuterScroll>
                    </DialogBody>
                    <DialogFooter>
                        <ResizeGrip width="10" height="10" viewBox="0 0 10 10" fill="#888888">
                            <rect x="8" y="0" width="1" height="1" />
                            <rect x="6" y="2" width="1" height="1" /><rect x="8" y="2" width="1" height="1" />
                            <rect x="4" y="4" width="1" height="1" /><rect x="6" y="4" width="1" height="1" /><rect x="8" y="4" width="1" height="1" />
                            <rect x="2" y="6" width="1" height="1" /><rect x="4" y="6" width="1" height="1" /><rect x="6" y="6" width="1" height="1" /><rect x="8" y="6" width="1" height="1" />
                            <rect x="0" y="8" width="1" height="1" /><rect x="2" y="8" width="1" height="1" /><rect x="4" y="8" width="1" height="1" /><rect x="6" y="8" width="1" height="1" /><rect x="8" y="8" width="1" height="1" />
                        </ResizeGrip>
                    </DialogFooter>
                </DialogFrame>
            </Dialog>

            <ViewBatchMark />
            <ColumnMark />
            <ArrowMark width="130" height="50" viewBox="0 0 130 50" fill="none">
                <path d="M121 8L20 39" stroke="#ff4444" strokeWidth="2.5" strokeDasharray="9 4" />
                <path d="M9 44l13-11 3 10z" fill="#ff4444" />
            </ArrowMark>
        </Shell>
    );
}
